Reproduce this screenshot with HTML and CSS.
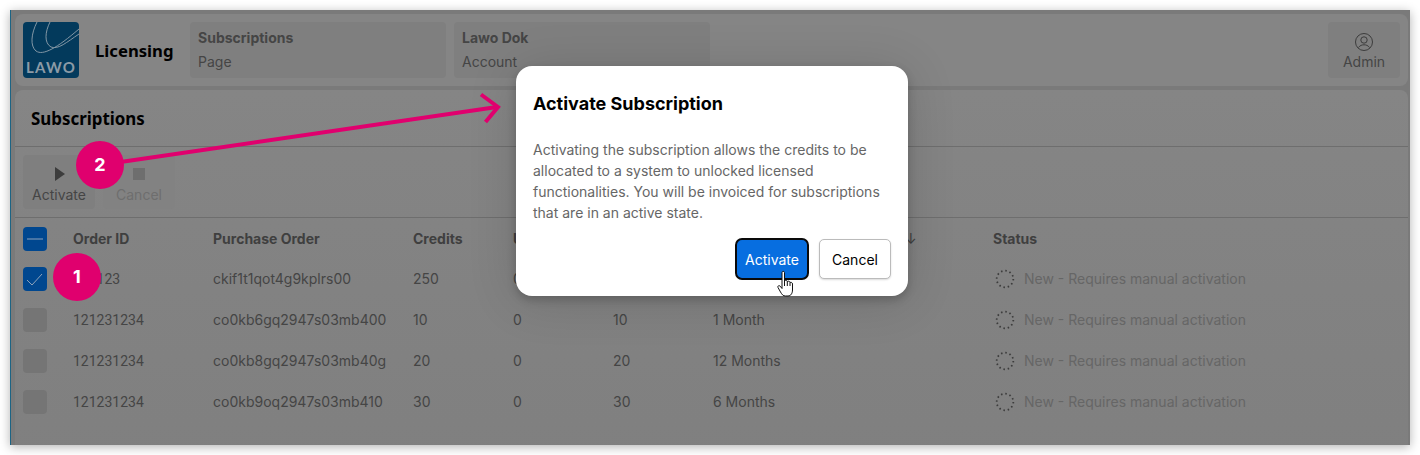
FILE: index.html
```html
<!DOCTYPE html>
<html lang="en">
<head>
    <meta charset="UTF-8">
    <title>Licensing</title>
    <link rel="stylesheet" href="styles.css">
</head>
<body>
    <div class="window">
        <header class="topbar">
            <div class="logo">
                <svg class="logo-lines" width="56" height="56" viewBox="0 0 56 56" fill="none">
                    <path d="M14 0C8 12 7 24 13 29C20 34 34 26 56 7" />
                    <path d="M27 0C22 10 21 21 28 25C35 28 44 20 56 12" />
                </svg>
                <span class="logo-text">LAWO</span>
            </div>
            <div class="app-name">Licensing</div>
            <div class="tile">
                <strong>Subscriptions</strong>
                <span>Page</span>
            </div>
            <div class="tile">
                <strong>Lawo Dok</strong>
                <span>Account</span>
            </div>
            <div class="admin">
                <svg width="20" height="20" viewBox="0 0 20 20" fill="none">
                    <circle cx="10" cy="10" r="8.5" />
                    <circle cx="10" cy="8" r="3.2" />
                    <path d="M4.5 15.5C6 13.4 8 12.8 10 12.8C12 12.8 14 13.4 15.5 15.5" />
                </svg>
                <span>Admin</span>
            </div>
        </header>

        <main class="panel">
            <h1 class="panel-title">Subscriptions</h1>
            <div class="toolbar">
                <div class="tool tool-on">
                    <span class="icon-play"></span>
                    <span>Activate</span>
                </div>
                <div class="tool tool-off">
                    <span class="icon-stop"></span>
                    <span>Cancel</span>
                </div>
            </div>

            <div class="row row-head">
                <span class="check check-on">
                    <svg width="24" height="24" viewBox="0 0 24 24"><path d="M4 12H20" /></svg>
                </span>
                <span>Order ID</span>
                <span>Purchase Order</span>
                <span>Credits</span>
                <span>Used</span>
                <span>Available</span>
                <span class="sorted">Duration <i>↓</i></span>
                <span>Status</span>
            </div>
            <div class="row">
                <span class="check check-on">
                    <svg width="24" height="24" viewBox="0 0 24 24"><path d="M4 13L9 18L19 7" /></svg>
                </span>
                <span class="order-id">121123</span>
                <span>ckif1t1qot4g9kplrs00</span>
                <span>250</span>
                <span>0</span>
                <span>250</span>
                <span>1 Month</span>
                <span class="status"><svg class="dots" width="20" height="20" viewBox="0 0 20 20"><circle cx="10" cy="10" r="8.300" /></svg>New - Requires manual activation</span>
            </div>
            <div class="row">
                <span class="check"></span>
                <span class="order-id">121231234</span>
                <span>co0kb6gq2947s03mb400</span>
                <span>10</span>
                <span>0</span>
                <span>10</span>
                <span>1 Month</span>
                <span class="status"><svg class="dots" width="20" height="20" viewBox="0 0 20 20"><circle cx="10" cy="10" r="8.300" /></svg>New - Requires manual activation</span>
            </div>
            <div class="row">
                <span class="check"></span>
                <span class="order-id">121231234</span>
                <span>co0kb8gq2947s03mb40g</span>
                <span>20</span>
                <span>0</span>
                <span>20</span>
                <span>12 Months</span>
                <span class="status"><svg class="dots" width="20" height="20" viewBox="0 0 20 20"><circle cx="10" cy="10" r="8.300" /></svg>New - Requires manual activation</span>
            </div>
            <div class="row">
                <span class="check"></span>
                <span class="order-id">121231234</span>
                <span>co0kb9oq2947s03mb410</span>
                <span>30</span>
                <span>0</span>
                <span>30</span>
                <span>6 Months</span>
                <span class="status"><svg class="dots" width="20" height="20" viewBox="0 0 20 20"><circle cx="10" cy="10" r="8.300" /></svg>New - Requires manual activation</span>
            </div>
        </main>

        <section class="modal">
            <h2>Activate Subscription</h2>
            <p>Activating the subscription allows the credits to be allocated to a system to unlocked licensed functionalities. You will be invoiced for subscriptions that are in an active state.</p>
            <div class="modal-actions">
                <button type="button" class="btn btn-primary">Activate</button>
                <button type="button" class="btn">Cancel</button>
            </div>
        </section>
    </div>

    <!-- callouts drawn over the screenshot -->
    <svg class="arrow" width="1420" height="455" viewBox="0 0 1420 455" fill="none">
        <path d="M100 165L497 107" />
        <path d="M481 94.500L498 107L485.500 122" />
    </svg>
    <div class="badge badge-one">1</div>
    <div class="badge badge-two">2</div>

    <svg class="cursor" width="18" height="28" viewBox="0 0 18 28">
        <path d="M5 2.500C5 1 7.500 1 7.500 2.500V11C8.500 10 10 10.300 10.300 11.500C11.300 10.800 12.800 11.200 13 12.500C14 12 15.500 12.500 15.500 14V20C15.500 23 14 26 11 26H8.500C6 26 5 24.500 3.500 22L1 17.500C.3 16 2 15 3.200 16.200L5 18.500Z" />
        <path d="M7.500 11V16M10.300 11.500V16M13 12.500V16" />
    </svg>
</body>
</html>
```

FILE: styles.css
```css
* {
    box-sizing: border-box;
}

body {
    margin: 0;
    height: 455px;
    padding: 10px;
    overflow: hidden;
    position: relative;
    background-color: #ffffff;
    font-family: 'Inter', sans-serif;
    font-size: 14px;
    color: #454545;
}

.window {
    position: relative;
    height: 435px;
    padding: 4px 2px 0 4px;
    overflow: hidden;
    background-color: #7a7a7a;
    border-left: 1px solid #1c6484;
    box-shadow: 0 2px 10px rgba(0, 0, 0, 0.3);
}

/* top bar */
.topbar {
    display: flex;
    align-items: center;
    gap: 8px;
    height: 72px;
    padding: 8px;
    background-color: #858585;
    border-radius: 8px;
}

.logo {
    position: relative;
    width: 56px;
    height: 56px;
    flex: none;
    overflow: hidden;
    background-color: #033a5c;
    border-radius: 4px;
}

.logo-lines {
    position: absolute;
    top: 0;
    left: 0;
}

.logo-lines path {
    stroke: #8397a5;
    stroke-width: 1;
}

.logo-text {
    position: absolute;
    left: 3px;
    bottom: 2px;
    font-family: 'Lato', sans-serif;
    font-size: 15px;
    font-weight: 700;
    letter-spacing: 1.2px;
    color: #8c9ba6;
}

.app-name {
    width: 87px;
    margin-left: 8px;
    font-family: 'Noto Sans', sans-serif;
    font-size: 16.7px;
    font-weight: 700;
    color: #000000;
}

.tile {
    display: flex;
    flex-direction: column;
    gap: 6px;
    width: 256px;
    height: 56px;
    padding: 7px 8px;
    background-color: #7f7f7f;
    border-radius: 4px;
    line-height: 18px;
}

.admin {
    display: flex;
    flex-direction: column;
    align-items: center;
    gap: 1px;
    width: 72px;
    height: 56px;
    margin-left: auto;
    padding-top: 10px;
    background-color: #7f7f7f;
    border-radius: 4px;
    line-height: 18px;
}

.admin svg circle,
.admin svg path {
    stroke: #3c3c3c;
    stroke-width: 1;
}

/* main panel */
.panel {
    height: 400px;
    margin-top: 4px;
    background: linear-gradient(#858585, #7f7f7f);
    border-radius: 8px 8px 0 0;
}

.panel-title {
    height: 57px;
    margin: 0;
    padding-left: 16px;
    font-family: 'Noto Sans', sans-serif;
    font-size: 16.9px;
    font-weight: 700;
    line-height: 57px;
    color: #000000;
    border-bottom: 1px solid #6e6e6e;
}

.toolbar {
    display: flex;
    gap: 8px;
    height: 71px;
    padding: 8px;
    border-bottom: 1px solid #6e6e6e;
}

.tool {
    display: flex;
    flex-direction: column;
    align-items: center;
    width: 72px;
    height: 54px;
    padding-top: 12px;
    gap: 5px;
    line-height: 18px;
    border-radius: 4px;
}

.tool-on {
    background-color: #7f7f7f;
}

.tool-off {
    color: #6e6e6e;
    background-color: #828282;
}

.icon-play {
    width: 0;
    height: 0;
    margin-left: 2px;
    border-style: solid;
    border-width: 7px 0 7px 10px;
    border-color: transparent transparent transparent #3c3c3c;
}

.icon-stop {
    width: 12px;
    height: 12px;
    margin: 1px 0;
    background-color: #6e6e6e;
}

/* table */
.row {
    display: grid;
    grid-template-columns: 50px 140px 200px 100px 100px 100px 280px 1fr;
    align-items: center;
    height: 41px;
    padding-left: 8px;
    line-height: 18px;
}

.row-head {
    height: 40px;
    padding-top: 2px;
    font-weight: 650;
    color: #3f3f3f;
}

.order-id {
    font-family: 'Roboto', sans-serif;
    font-size: 14px;
}

.sorted i {
    margin-left: 130px;
    font-style: normal;
    font-weight: 400;
}

.check {
    display: block;
    width: 24px;
    height: 24px;
    background-color: #757575;
    border-radius: 4px;
}

.check svg {
    display: block;
}

.check path {
    fill: none;
    stroke: #8ea3bb;
    stroke-width: 1;
}

.check-on {
    background-color: #00478f;
}

.status {
    display: flex;
    align-items: center;
    gap: 9px;
    padding-left: 2px;
    color: #666666;
}

.dots circle {
    fill: none;
    stroke: #3c3c3c;
    stroke-width: 1.8;
    stroke-dasharray: 1.5 2.85;
}

/* dialog */
.modal {
    position: absolute;
    top: 56px;
    left: 505px;
    width: 392px;
    height: 230px;
    padding: 26px 17px 16px;
    background-color: #ffffff;
    border-radius: 16px;
    box-shadow: 0 4px 50px rgba(0, 0, 0, 0.14), 0 4px 10px rgba(0, 0, 0, 0.2);
}

.modal h2 {
    margin: 0;
    font-size: 18px;
    font-weight: 700;
    line-height: 24px;
    color: #000000;
}

.modal p {
    margin: 23px 0 0;
    line-height: 21px;
    color: #666666;
}

.modal-actions {
    display: flex;
    justify-content: flex-end;
    align-items: center;
    gap: 10px;
    margin-top: 15px;
}

.btn {
    width: 72px;
    height: 40px;
    padding: 0;
    font-family: 'Inter', sans-serif;
    font-size: 14px;
    color: #000000;
    background-color: #ffffff;
    border: 1px solid #bbbbbb;
    border-radius: 5px;
    box-shadow: 0 1px 2px rgba(0, 0, 0, 0.15);
}

.btn-primary {
    width: 74px;
    height: 42px;
    color: #ffffff;
    background-color: #076ee0;
    border: 2px solid #0a0a0a;
    border-radius: 7px;
    box-shadow: none;
}

/* callouts */
.arrow {
    position: absolute;
    top: 0;
    left: 0;
}

.arrow path {
    stroke: #e0006e;
    stroke-width: 4;
}

.badge {
    position: absolute;
    width: 48px;
    height: 48px;
    font-size: 18px;
    font-weight: 700;
    line-height: 48px;
    text-align: center;
    color: #ffffff;
    background-color: #e0006e;
    border-radius: 50%;
}

.badge-one {
    top: 253px;
    left: 53px;
}

.badge-two {
    top: 141px;
    left: 76px;
}

.cursor {
    position: absolute;
    top: 270px;
    left: 777px;
}

.cursor path {
    fill: #ffffff;
    stroke: #111111;
    stroke-width: 1;
}
```
